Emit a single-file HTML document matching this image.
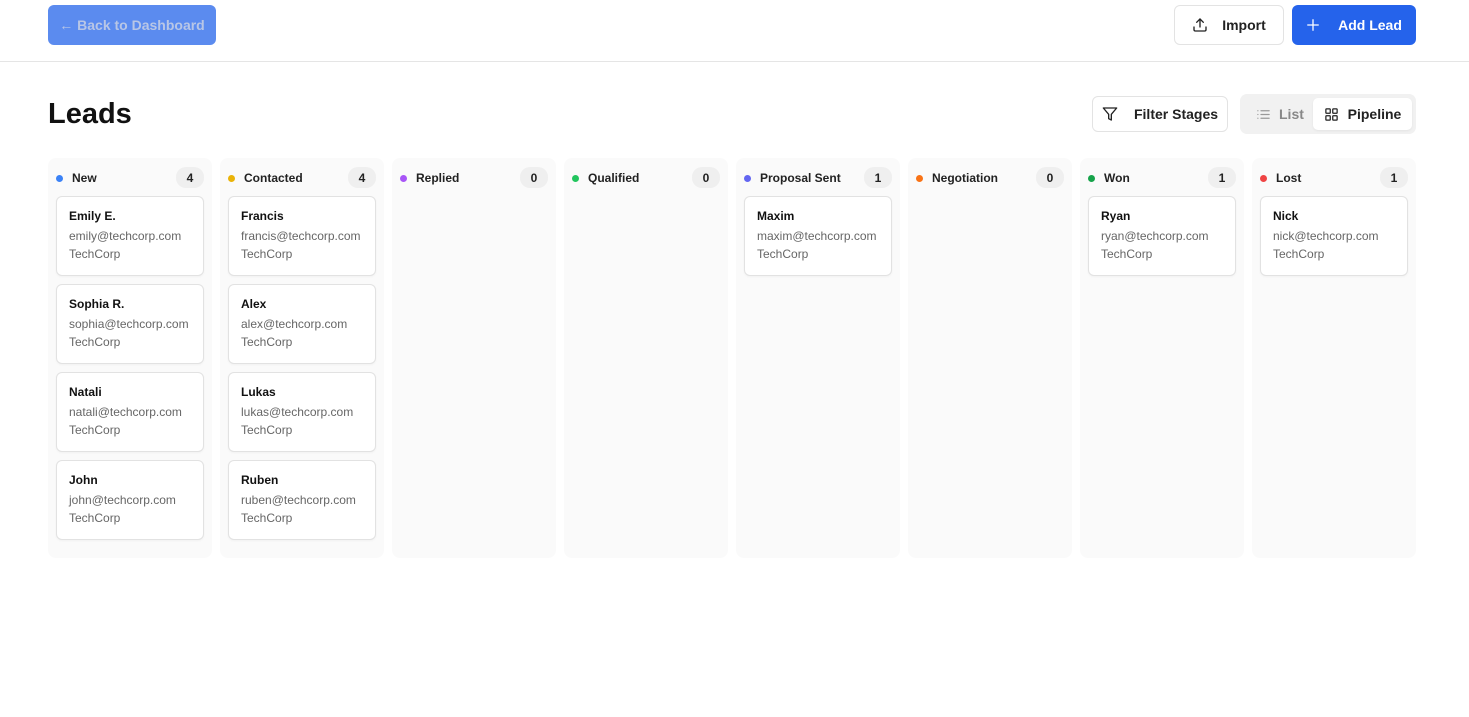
<!DOCTYPE html>
<html><head><meta charset="utf-8"><style>
*{box-sizing:border-box;margin:0;padding:0}
body{width:1469px;height:717px;background:#fff;font-family:"Liberation Sans",sans-serif;color:#111;position:relative;overflow:hidden}
.abs{position:absolute}
.topbar{left:0;top:0;width:1469px;height:62px;border-bottom:1px solid #e5e5e5}
.btn{position:absolute;display:flex;align-items:center;justify-content:center;border-radius:6px;font-size:14px;font-weight:bold}
.back{left:48px;top:5px;width:168px;height:40px;background:#5b8bef;color:#b8c6e6;font-weight:bold}
.imp{left:1174px;top:5px;width:110px;height:40px;border:1px solid #e3e3e3;background:#fff;color:#222;gap:14px}
.add{left:1292px;top:5px;width:124px;height:40px;background:#2563eb;color:#fff;gap:18px}
h1{position:absolute;left:48px;top:98px;font-size:29px;font-weight:bold;color:#111}
.filter{left:1092px;top:96px;width:136px;height:36px;border:1px solid #e3e3e3;gap:16px;color:#222}
.toggle{left:1240px;top:94px;width:176px;height:40px;background:#f1f1f1;border-radius:7px}
.list{left:1256px;top:106px;font-size:14px;color:#888;font-weight:bold;display:flex;gap:8px;align-items:center}
.pipe{left:1313px;top:98px;width:99px;height:32px;background:#fff;border-radius:5px;display:flex;align-items:center;justify-content:center;gap:9px;font-size:14px;font-weight:bold;color:#222;box-shadow:0 1px 2px rgba(0,0,0,.06)}
.col{position:absolute;top:158px;width:164px;height:400px;background:#fafafa;border-radius:8px}
.ch{position:absolute;left:8px;top:10px;right:8px;height:20px;display:flex;align-items:center;font-size:12px;font-weight:bold;color:#222}
.dot{width:7px;height:7px;border-radius:50%;margin-right:9px}
.cnt{position:absolute;right:0;top:-1px;width:28px;height:21px;border-radius:10px;background:#efefef;font-size:12px;display:flex;align-items:center;justify-content:center}
.card{position:absolute;left:8px;width:148px;height:80px;background:#fff;border:1px solid #e2e2e2;border-radius:6px;padding:12px 0 0 12px;box-shadow:0 1px 2px rgba(0,0,0,.04)}
.card b{display:block;font-size:12px;color:#111;height:20px}
.card span{display:block;font-size:12px;color:#666;height:18px}
</style></head><body>
<div class="abs topbar"></div>
<div class="btn back">← Back to Dashboard</div>
<div class="btn imp"><svg width="16" height="16" viewBox="0 0 24 24" fill="none" stroke="#222" stroke-width="2" stroke-linecap="round" stroke-linejoin="round"><path d="M21 15v4a2 2 0 0 1-2 2H5a2 2 0 0 1-2-2v-4"/><path d="M17 8l-5-5-5 5"/><path d="M12 3v12"/></svg>Import</div>
<div class="btn add"><svg width="14" height="14" viewBox="0 0 24 24" stroke="#fff" stroke-width="2.2" stroke-linecap="round"><path d="M12 3v18M3 12h18"/></svg>Add Lead</div>
<h1>Leads</h1>
<div class="btn filter"><svg width="16" height="16" viewBox="0 0 24 24" fill="none" stroke="#222" stroke-width="2" stroke-linejoin="round"><path d="M22 3H2l8 9.46V19l4 2v-8.54L22 3z"/></svg>Filter Stages</div>
<div class="abs toggle"></div>
<div class="abs list"><svg width="15" height="15" viewBox="0 0 24 24" stroke="#999" stroke-width="2" stroke-linecap="round"><path d="M8 6h13M8 12h13M8 18h13M3 6h.01M3 12h.01M3 18h.01"/></svg>List</div>
<div class="abs pipe"><svg width="15" height="15" viewBox="0 0 24 24" fill="none" stroke="#222" stroke-width="2"><rect x="3" y="3" width="7" height="7" rx="1"/><rect x="14" y="3" width="7" height="7" rx="1"/><rect x="3" y="14" width="7" height="7" rx="1"/><rect x="14" y="14" width="7" height="7" rx="1"/></svg>Pipeline</div>

<div class="col" style="left:48px"><div class="ch"><i class="dot" style="background:#3b82f6"></i>New<span class="cnt">4</span></div>
<div class="card" style="top:38px"><b>Emily E.</b><span>emily@techcorp.com</span><span>TechCorp</span></div>
<div class="card" style="top:126px"><b>Sophia R.</b><span>sophia@techcorp.com</span><span>TechCorp</span></div>
<div class="card" style="top:214px"><b>Natali</b><span>natali@techcorp.com</span><span>TechCorp</span></div>
<div class="card" style="top:302px"><b>John</b><span>john@techcorp.com</span><span>TechCorp</span></div></div>
<div class="col" style="left:220px"><div class="ch"><i class="dot" style="background:#eab308"></i>Contacted<span class="cnt">4</span></div>
<div class="card" style="top:38px"><b>Francis</b><span>francis@techcorp.com</span><span>TechCorp</span></div>
<div class="card" style="top:126px"><b>Alex</b><span>alex@techcorp.com</span><span>TechCorp</span></div>
<div class="card" style="top:214px"><b>Lukas</b><span>lukas@techcorp.com</span><span>TechCorp</span></div>
<div class="card" style="top:302px"><b>Ruben</b><span>ruben@techcorp.com</span><span>TechCorp</span></div></div>
<div class="col" style="left:392px"><div class="ch"><i class="dot" style="background:#a855f7"></i>Replied<span class="cnt">0</span></div></div>
<div class="col" style="left:564px"><div class="ch"><i class="dot" style="background:#22c55e"></i>Qualified<span class="cnt">0</span></div></div>
<div class="col" style="left:736px"><div class="ch"><i class="dot" style="background:#6366f1"></i>Proposal Sent<span class="cnt">1</span></div>
<div class="card" style="top:38px"><b>Maxim</b><span>maxim@techcorp.com</span><span>TechCorp</span></div></div>
<div class="col" style="left:908px"><div class="ch"><i class="dot" style="background:#f97316"></i>Negotiation<span class="cnt">0</span></div></div>
<div class="col" style="left:1080px"><div class="ch"><i class="dot" style="background:#16a34a"></i>Won<span class="cnt">1</span></div>
<div class="card" style="top:38px"><b>Ryan</b><span>ryan@techcorp.com</span><span>TechCorp</span></div></div>
<div class="col" style="left:1252px"><div class="ch"><i class="dot" style="background:#ef4444"></i>Lost<span class="cnt">1</span></div>
<div class="card" style="top:38px"><b>Nick</b><span>nick@techcorp.com</span><span>TechCorp</span></div></div>
</body></html>
